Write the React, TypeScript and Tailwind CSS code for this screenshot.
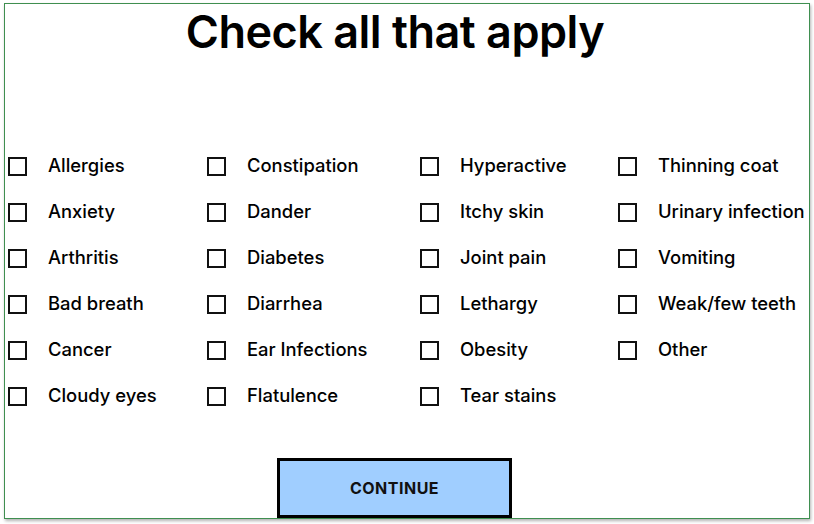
import React, { useState } from 'react';

const columns: string[][] = [
  ['Allergies', 'Anxiety', 'Arthritis', 'Bad breath', 'Cancer', 'Cloudy eyes'],
  ['Constipation', 'Dander', 'Diabetes', 'Diarrhea', 'Ear Infections', 'Flatulence'],
  ['Hyperactive', 'Itchy skin', 'Joint pain', 'Lethargy', 'Obesity', 'Tear stains'],
  ['Thinning coat', 'Urinary infection', 'Vomiting', 'Weak/few teeth', 'Other'],
];

const colWidths = ['w-[199px]', 'w-[213px]', 'w-[198px]', 'w-[190px]'];

export default function App() {
  const [checked, setChecked] = useState<Record<string, boolean>>({});

  const toggle = (name: string) => setChecked((c) => ({ ...c, [name]: !c[name] }));

  return (
    <div className="w-[814px] h-[524px] bg-white pl-[4px] pt-[3px]" style={{ fontFamily: 'Inter, "Liberation Sans", sans-serif' }}>
      <div className="w-[806px] h-[516px] border border-[#3f8f50] bg-white shadow-[1px_2px_3px_rgba(0,0,0,0.3)] flex flex-col overflow-hidden">
        {/* Title */}
        <div className="w-[780px] text-center">
          <h1 className="text-[45px] leading-[56px] font-semibold text-black tracking-[-0.5px]">Check all that apply</h1>
        </div>

        {/* Options */}
        <div className="flex pl-[3px] mt-[83px] text-black">
          {columns.map((col, ci) => (
            <div key={ci} className={`flex flex-col shrink-0 ${colWidths[ci]}`}>
              {col.map((item) => (
                <label key={item} className="flex items-center h-[46px] cursor-pointer whitespace-nowrap">
                  <button
                    onClick={() => toggle(item)}
                    className="w-[19px] h-[19px] border-2 border-[#111] bg-white flex items-center justify-center shrink-0"
                  >
                    {checked[item] && <span className="text-[13px] leading-none">✓</span>}
                  </button>
                  <span className="ml-[21px] text-[18.4px] font-medium">{item}</span>
                </label>
              ))}
            </div>
          ))}
        </div>

        {/* Continue */}
        <div className="mt-auto pl-[272px]">
          <button className="w-[235px] h-[60px] border-[3px] border-black bg-[#a0ceff] text-[16px] font-bold tracking-[0.5px] text-[#111]">
            CONTINUE
          </button>
        </div>
      </div>
    </div>
  );
}
